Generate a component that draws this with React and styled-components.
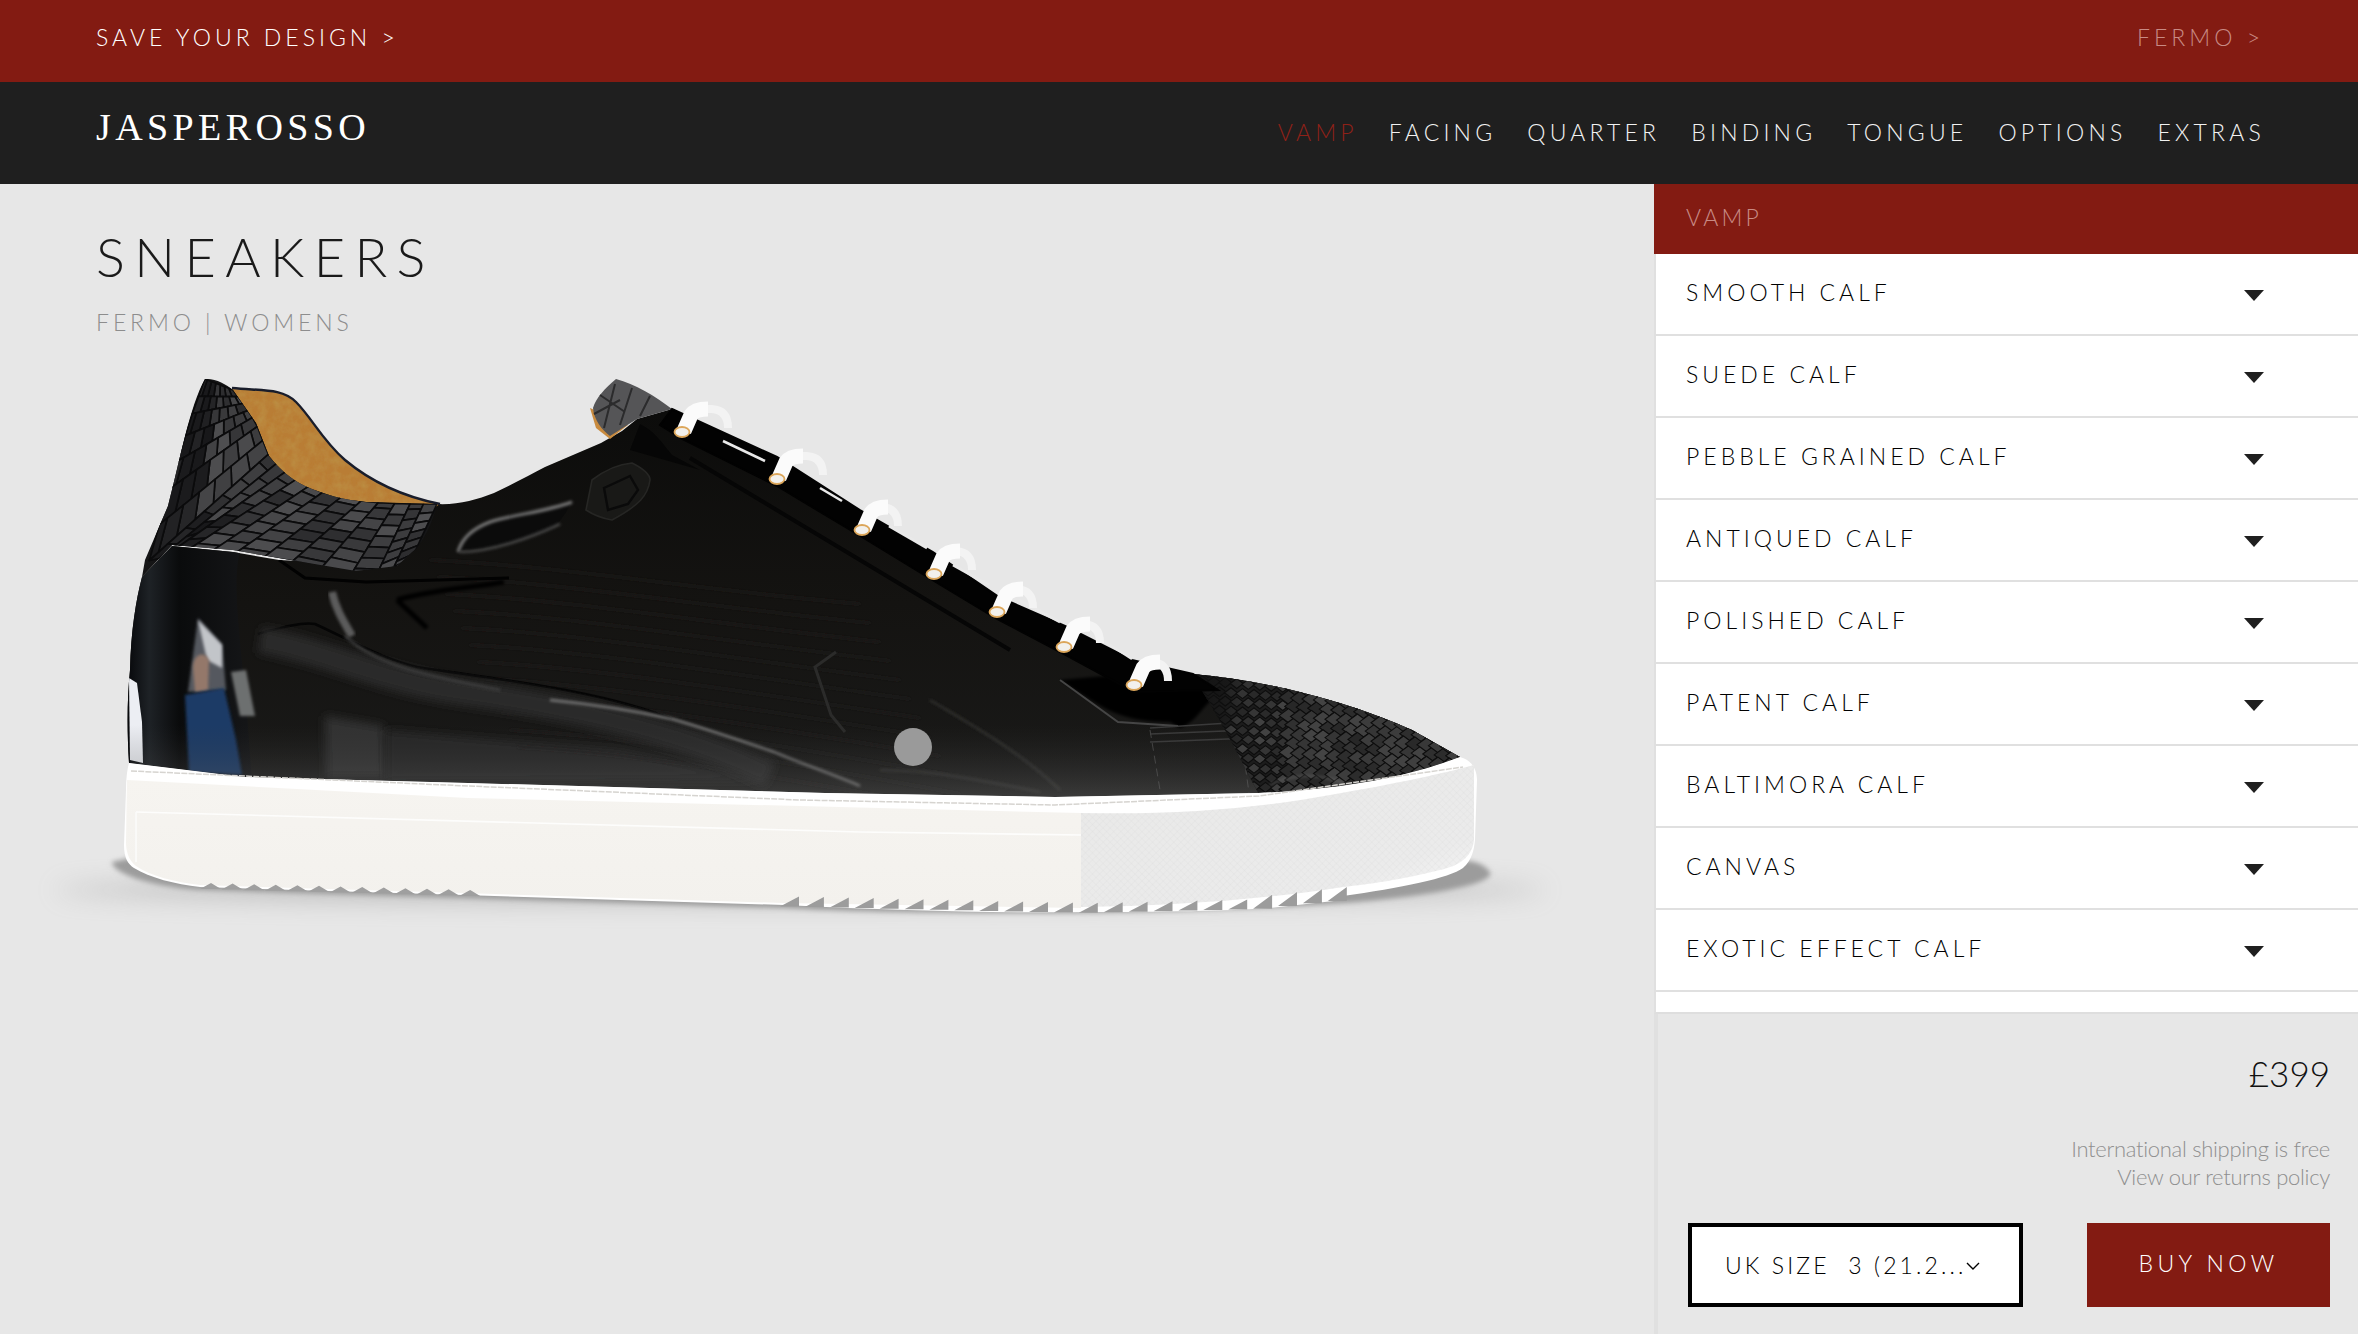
import styled, { createGlobalStyle } from "styled-components";

const Global = createGlobalStyle`
  html, body { margin: 0; padding: 0; background: #e7e7e7; }
  * { box-sizing: border-box; }
`;

const font = `Lato, "Noto Sans", sans-serif`;
const red = "#831b12";

const materials = [
  "SMOOTH CALF",
  "SUEDE CALF",
  "PEBBLE GRAINED CALF",
  "ANTIQUED CALF",
  "POLISHED CALF",
  "PATENT CALF",
  "BALTIMORA CALF",
  "CANVAS",
  "EXOTIC EFFECT CALF",
];

const sections = ["VAMP", "FACING", "QUARTER", "BINDING", "TONGUE", "OPTIONS", "EXTRAS"];

// eyelet x, y and how far its lace arches to the right
const eyelets = [
  [682, 432, 46], [777, 479, 46], [862, 530, 36], [934, 574, 38], [997, 612, 36], [1064, 647, 36], [1134, 685, 34],
];

const lacesGloss = [
  [723, 441, 765, 461], [820, 488, 842, 501], [889, 526, 927, 548],
  [953, 565, 989, 585], [1019, 600, 1060, 622], [1098, 637, 1132, 659],
];

const rnd = (a, b) => {
  const v = Math.sin(a * 12.9898 + b * 78.233) * 43758.5453;
  return v - Math.floor(v);
};

const along = (pts, t) => {
  const f = t * (pts.length - 1);
  const i = Math.min(Math.floor(f), pts.length - 2);
  const k = f - i;
  return [pts[i][0] + (pts[i + 1][0] - pts[i][0]) * k, pts[i][1] + (pts[i + 1][1] - pts[i][1]) * k];
};

// croc cells of the heel counter, warped between its inner and outer edge
const heelInner = [[233, 390], [245, 406], [256, 423], [269, 456], [290, 476], [320, 492], [366, 502], [405, 504], [437, 504]];
const heelOuter = [[205, 379], [190, 420], [172, 480], [148, 565], [178, 548], [233, 552], [300, 562], [370, 578], [412, 558]];
const heelCells = [];
for (let c = 0; c < 19; c++) {
  for (let r = 0; r < 7; r++) {
    const q = (t, s) => {
      const a = along(heelInner, t);
      const b = along(heelOuter, t);
      return [a[0] + (b[0] - a[0]) * s, a[1] + (b[1] - a[1]) * s];
    };
    const off = c % 2 ? 0.5 : 0;
    const t0 = c / 19;
    const t1 = (c + 1) / 19;
    const s0 = Math.max(0, (r - off) / 6.5);
    const s1 = Math.min(1, (r + 1 - off) / 6.5);
    const pts = [q(t0, s0), q(t1, s0), q(t1, s1), q(t0, s1)];
    const dark = r > 3 && c < 10;
    const tone = (dark ? 24 : 44) + rnd(c, r) * (dark ? 14 : 36);
    heelCells.push({
      id: `${c}-${r}`,
      points: pts.map((p) => p.map((n) => n.toFixed(1)).join(",")).join(" "),
      tone: Math.round(tone),
    });
  }
}

// scales of the toe cap
const toeCells = [];
for (let i = 0; i < 26; i++) {
  for (let j = 0; j < 15; j++) {
    const w = i < 9 ? 6.5 : 9.5;
    const h = i < 9 ? 5 : 7;
    const cx = 1185 + i * 11.5 + (j % 2 ? 5.75 : 0);
    const cy = 664 + j * 9.2 + (i - 13) * 0.9;
    const tone = (i < 4 ? 22 : 38) + rnd(i + 3, j + 9) * (i < 4 ? 14 : 30);
    toeCells.push({
      id: `${i}-${j}`,
      points: `${cx - w},${cy} ${cx},${cy - h} ${cx + w},${cy} ${cx},${cy + h}`,
      tone: Math.round(tone),
    });
  }
}

const interp = (table, x) => {
  for (let i = 0; i < table.length - 1; i++) {
    if (x <= table[i + 1][0]) {
      const k = (x - table[i][0]) / (table[i + 1][0] - table[i][0]);
      return table[i][1] + (table[i + 1][1] - table[i][1]) * k;
    }
  }
  return table[table.length - 1][1];
};

const frontBase = [[780, 905], [1090, 912], [1270, 908], [1343, 900]];
const backBase = [[200, 888], [463, 895]];

const frontTeeth = () => {
  let d = "";
  for (let x = 780; x < 1340; x += 24.9) {
    const r = x + 19;
    const y = interp(frontBase, r);
    const h = x > 1240 ? 13 : 9;
    d += `M${x} ${y + 1}L${r} ${y - h}L${r} ${y + 1}Z`;
  }
  return d;
};

const backTeeth = () => {
  let d = "";
  for (let x = 200; x < 460; x += 21.6) {
    const y = interp(backBase, x);
    d += `M${x} ${y + 1}L${x + 11} ${y - 5}L${x + 21} ${y + 1}Z`;
  }
  return d;
};

// grain lines of the patent leather on the vamp
const grain = [];
for (let i = 0; i < 12; i++) {
  const y = 560 + i * 17;
  grain.push(`M${430 + i * 8} ${y}C${560 + i * 6} ${y + 6} ${700 + i * 8} ${y + 30} ${860 + i * 10} ${y + 44 + i * 2}`);
}

const UPPER =
  "M129 763C127 730 127 700 130 670C131 630 136 600 142 577L172 546L233 552L279 560L397 566L437 504C458 505 476 500 494 493C515 483 530 475 545 467L601 443L622 431L637 419L672 409L777 457L860 510L933 552L999 597L1065 626L1132 660L1193 674C1260 680 1340 698 1412 730L1460 757C1400 780 1330 790 1258 793L1055 797L825 793L468 783L244 777Z";
const COUNTER =
  "M205 379C215 378 226 384 233 390L256 423L269 456C280 470 292 480 305 486C325 495 345 500 366 502L437 504C432 525 422 545 412 552L397 566L356 571L279 558L233 550L172 545L142 577L145 560L168 506C180 460 190 405 205 379Z";
const TOE = "M1187 670C1215 705 1240 760 1262 800L1480 790L1480 700L1290 665Z";
const PANEL =
  "M1081 813C1180 815 1260 808 1330 795C1400 783 1445 773 1474 765L1474 840C1472 858 1458 866 1440 870C1400 880 1370 884 1343 887C1260 900 1170 906 1081 907Z";

const Shoe = () => (
  <ShoeSvg viewBox="0 350 1654 700">
    <defs>
      <filter id="wide" x="-20%" y="-300%" width="140%" height="700%"><feGaussianBlur stdDeviation="12" /></filter>
      <filter id="blur6" x="-20%" y="-40%" width="140%" height="180%"><feGaussianBlur stdDeviation="5" /></filter>
      <filter id="blur2" x="-20%" y="-40%" width="140%" height="180%"><feGaussianBlur stdDeviation="1.4" /></filter>
      <filter id="soft" x="-10%" y="-60%" width="120%" height="220%"><feGaussianBlur stdDeviation="2.4" /></filter>
      <filter id="suede">
        <feTurbulence type="fractalNoise" baseFrequency="0.12" numOctaves="3" />
        <feColorMatrix values="0 0 0 0 0.5  0 0 0 0 0.28  0 0 0 0 0.06  0 0 0 1.4 -0.45" />
        <feComposite in2="SourceGraphic" operator="in" />
        <feMerge><feMergeNode in="SourceGraphic" /><feMergeNode /></feMerge>
      </filter>
      <linearGradient id="body" x1="0" y1="0" x2="0" y2="1">
        <stop offset="0" stopColor="#0c0c0b" />
        <stop offset="0.5" stopColor="#141311" />
        <stop offset="1" stopColor="#1a1a19" />
      </linearGradient>
      <linearGradient id="heelCup" x1="0" y1="0" x2="1" y2="0">
        <stop offset="0" stopColor="#06070a" />
        <stop offset="0.18" stopColor="#1e2226" />
        <stop offset="0.42" stopColor="#0a0b0c" />
        <stop offset="1" stopColor="#151618" />
      </linearGradient>
      <linearGradient id="toeIn" x1="0" y1="0" x2="1" y2="0">
        <stop offset="0" stopColor="#101010" stopOpacity="1" />
        <stop offset="0.2" stopColor="#101010" stopOpacity="0" />
      </linearGradient>
      <linearGradient id="baseFade" x1="0" y1="0" x2="0" y2="1">
        <stop offset="0" stopColor="#3a3a3a" stopOpacity="0" />
        <stop offset="1" stopColor="#707070" stopOpacity="0.4" />
      </linearGradient>
      <linearGradient id="capFade" x1="0" y1="0" x2="1" y2="1">
        <stop offset="0" stopColor="#e9e9e8" />
        <stop offset="0.75" stopColor="#ebebeb" />
        <stop offset="1" stopColor="#f8f8f8" />
      </linearGradient>
      <linearGradient id="cream" x1="0" y1="0" x2="0" y2="1">
        <stop offset="0" stopColor="#f6f4f0" />
        <stop offset="1" stopColor="#f3f1ed" />
      </linearGradient>
      <pattern id="mesh" width="5" height="5" patternUnits="userSpaceOnUse" patternTransform="rotate(45)">
        <path d="M0 0H5M0 0V5" stroke="#d8d8d8" strokeWidth="0.8" opacity="0.5" fill="none" />
      </pattern>
      <clipPath id="upperClip"><path d={UPPER} /></clipPath>
      <clipPath id="counterClip"><path d={COUNTER} /></clipPath>
      <clipPath id="toeClip"><path d={TOE} /></clipPath>
    </defs>

    {/* floor shadow */}
    <ellipse cx="800" cy="890" rx="745" ry="12" fill="#8e8e8e" opacity="0.5" filter="url(#wide)" />
    <path d="M112 862C112 875 160 888 200 890L463 898L784 908C900 915 1160 916 1343 903C1420 897 1496 885 1490 872C1480 858 1460 860 1440 860L130 858Z" fill="#9c9c9c" filter="url(#soft)" />

    {/* upper */}
    <path d={UPPER} fill="url(#body)" />
    <g clipPath="url(#upperClip)">
      <path d="M128 770C124 700 128 620 142 575L172 544L240 552C232 580 240 640 246 700L252 782Z" fill="url(#heelCup)" />
      <path d="M129 678L137 683L142 722L143 763L130 760Z" fill="#eceef3" />
      <path d="M188 692L198 618L222 644L226 690Z" fill="#55585e" filter="url(#blur2)" />
      <path d="M198 620L222 645L222 668L207 660Z" fill="#c2c5c9" filter="url(#blur2)" />
      <path d="M193 668C193 654 204 650 209 660L208 690L195 692Z" fill="#94786a" filter="url(#blur2)" />
      <path d="M185 695L224 688L236 740L242 775L189 772Z" fill="#1b3a66" filter="url(#blur2)" />
      <path d="M231 672L246 670L255 716L240 716Z" fill="#6d6f70" filter="url(#blur2)" />
      <path d="M325 716L384 726L386 778L326 778Z" fill="#303232" filter="url(#blur6)" />
      <path d="M386 730L620 750L770 780L386 782Z" fill="#262727" filter="url(#blur6)" />

      {/* patent gloss */}
      {grain.map((d) => (
        <path key={d} d={d} fill="none" stroke="#201f1d" strokeWidth="1.3" filter="url(#blur2)" />
      ))}
      <path d="M258 634C280 628 300 622 315 624C350 640 385 660 417 667C500 680 600 690 672 719" fill="none" stroke="#050505" strokeWidth="2.5" />
      <path d="M260 640C320 650 380 680 460 692C560 706 680 730 770 775" fill="none" stroke="#2a2a2a" strokeWidth="26" filter="url(#blur6)" />
      <path d="M332 592C336 610 344 622 352 636" fill="none" stroke="#5c5c5c" strokeWidth="8" filter="url(#blur2)" />
      <path d="M345 636C380 668 430 676 500 690" fill="none" stroke="#3c3c3c" strokeWidth="3" filter="url(#blur2)" />
      <path d="M550 700C590 704 640 712 672 719C710 730 745 742 774 752C805 765 835 775 860 786" fill="none" stroke="#7c7c7c" strokeWidth="2.4" filter="url(#blur2)" />
      <path d="M279 560L305 578L366 582L509 578" fill="none" stroke="#020202" strokeWidth="3" />
      <path d="M397 600C430 590 470 588 504 582M397 600L427 628" fill="none" stroke="#020202" strokeWidth="5" filter="url(#blur2)" />
      <path d="M458 550C462 540 470 532 482 526C510 512 540 510 570 504C566 514 560 522 552 528C520 540 490 550 458 550Z" fill="#0b0b0b" />
      <path d="M458 552C462 538 474 528 490 522C515 514 545 512 572 502" fill="none" stroke="#7a7a7a" strokeWidth="3" filter="url(#blur2)" />
      <path d="M460 552C490 552 530 538 560 524" fill="none" stroke="#555" strokeWidth="2" filter="url(#blur2)" />
      <path d="M592 480C605 470 620 464 632 463C642 468 650 474 650 480C648 495 640 505 612 520C600 518 592 514 586 510Z" fill="#191917" stroke="#262624" strokeWidth="1.6" />
      <path d="M604 488L630 476L638 490L628 504L608 510Z" fill="none" stroke="#0a0a0a" strokeWidth="2.4" />
      <path d="M672 455C660 440 655 432 640 424L630 450L700 470Z" fill="#060606" />
      <path d="M836 652L815 667L831 715L845 732" fill="none" stroke="#2b2b2a" strokeWidth="3" />
      <path d="M930 700C980 730 1020 752 1060 790M880 770C930 770 980 780 1040 792" fill="none" stroke="#343432" strokeWidth="2" filter="url(#blur2)" />

      {/* eyestay */}
      <path d="M690 458L860 560L1010 650" fill="none" stroke="#060606" strokeWidth="4" />
      <path d="M1060 680C1100 705 1115 722 1170 722L1180 728C1200 720 1200 705 1225 690L1150 672Z" fill="#030303" filter="url(#blur2)" />
      <path d="M1060 680L1118 722L1178 726" fill="none" stroke="#454545" strokeWidth="2" />
      <path d="M1150 728L1245 722M1150 734L1250 730M1150 742L1254 738" stroke="#3a3a3a" strokeWidth="1.4" fill="none" />
      <path d="M1150 730L1160 790M1240 728L1250 800" stroke="#444" strokeWidth="1" fill="none" strokeDasharray="8 5" />
      <rect x="130" y="725" width="1350" height="75" fill="url(#baseFade)" />

      {/* toe cap */}
      <g clipPath="url(#toeClip)">
        <rect x="1180" y="660" width="300" height="140" fill="#1c1c1c" />
        {toeCells.map((c) => (
          <polygon key={c.id} points={c.points} fill={`rgb(${c.tone},${c.tone},${c.tone})`} stroke="#0d0d0d" strokeWidth="1.1" />
        ))}
        <rect x="1180" y="660" width="300" height="140" fill="url(#toeIn)" />
      </g>
      <path d="M1270 785C1300 770 1330 775 1360 790" fill="none" stroke="#707070" strokeWidth="2" filter="url(#blur2)" opacity="0.5" />
    </g>

    {/* throat and tongue */}
    <path d="M590 408L596 428L610 439L628 425Z" fill="#c98b3f" />
    <path d="M616 379C605 388 596 398 593 408C594 420 602 430 610 436L637 419L672 409C655 396 635 384 616 379Z" fill="#555557" />
    <path d="M600 395L625 412M615 384L604 428M632 388L620 425M650 396L640 416M594 414L620 400" fill="none" stroke="#2b2b2c" strokeWidth="2" />
    <path d="M672 409L777 457L860 510L933 552L999 597L1065 626L1132 660L1193 674L1218 690L1134 692L1064 654L997 619L934 581L862 537L777 486L682 439L660 425Z" fill="#020202" stroke="#020202" strokeWidth="2" />
    {lacesGloss.map(([a, b, c, d]) => (
      <path key={a} d={`M${a} ${b}L${c} ${d}`} stroke="#e9e9e9" strokeWidth="2.6" />
    ))}

    {/* suede lining */}
    <path d="M232 389C262 391 282 388 296 402C312 418 322 440 345 460C375 485 410 498 440 504L400 530L280 500L225 410Z" fill="#b97d34" filter="url(#suede)" />
    <path d="M232 388C262 391 282 388 296 402C312 418 322 440 345 460C375 485 410 498 440 504" fill="none" stroke="#191d2b" strokeWidth="2.4" />

    {/* heel counter */}
    <path d={COUNTER} fill="#151516" />
    <g clipPath="url(#counterClip)">
      {heelCells.map((c) => (
        <polygon key={c.id} points={c.points} fill={`rgb(${c.tone},${c.tone},${c.tone + 2})`} stroke="#0b0b0c" strokeWidth="1.7" strokeLinejoin="round" />
      ))}
    </g>

    {/* sole */}
    <path d="M129 763C127 770 126 780 126 790L124 845C124 858 128 864 134 868C150 878 175 884 200 887L463 895L784 905C900 911 1000 913 1090 912C1160 912 1230 911 1270 908L1343 900L1343 896C1400 888 1450 878 1463 868C1472 860 1474 850 1475 840L1477 780C1477 770 1472 760 1460 757C1400 780 1330 790 1258 793L1055 797L825 793L468 783L244 777Z" fill="#fff" />
    <path d="M127 780L468 798L800 806L1081 813L1081 908L784 903L463 893L200 885C175 882 150 876 136 866C128 860 126 850 126 842Z" fill="url(#cream)" />
    <path d={PANEL} fill="url(#capFade)" />
    <path d={PANEL} fill="url(#mesh)" />
    <path d="M131 771L468 786L800 800L1055 805L1259 796L1463 767" fill="none" stroke="#d6d4d0" strokeWidth="1.5" strokeDasharray="6 1.2" />
    <path d="M136 812L860 832L1081 835" fill="none" stroke="#fdfdfc" strokeWidth="1.6" />
    <path d="M136 812L136 862" fill="none" stroke="#fbfbfa" strokeWidth="1.6" />

    {/* outsole teeth */}
    <path d={backTeeth()} fill="#9f9f9f" />
    <path d={frontTeeth()} fill="#9c9c9c" />

    {/* laces */}
    {eyelets.map(([x, y, w]) => (
      <g key={x}>
        <path d={`M${x + 24} ${y - 23}L${x + w - 16} ${y - 23}Q${x + w} ${y - 22} ${x + w} ${y - 4}`} stroke="#f3f3f3" strokeWidth="8" fill="none" />
        <path d={`M${x + 2} ${y - 1}L${x + 9} ${y - 17}Q${x + 13} ${y - 23} ${x + 26} ${y - 23}`} stroke="#fbfbfb" strokeWidth="15" fill="none" />
        <ellipse cx={x} cy={y} rx="7.5" ry="5" fill="#f2f0ec" stroke="#dca65a" strokeWidth="1.8" />
      </g>
    ))}

    <circle cx="913" cy="747" r="19" fill="#9a9a9a" />
  </ShoeSvg>
);

const App = () => (
  <Page>
    <Global />
    <TopBar>
      <SaveLink>SAVE YOUR DESIGN &gt;</SaveLink>
      <ModelLink>FERMO &gt;</ModelLink>
    </TopBar>
    <NavBar>
      <Logo>JASPEROSSO</Logo>
      <Nav>
        {sections.map((s, i) => (
          <NavItem key={s} $active={i === 0}>{s}</NavItem>
        ))}
      </Nav>
    </NavBar>
    <Main>
      <Stage>
        <Heading>
          <Title>SNEAKERS</Title>
          <Subtitle>FERMO | WOMENS</Subtitle>
        </Heading>
        <Shoe />
      </Stage>
      <Side>
        <SideHeader>VAMP</SideHeader>
        <List>
          {materials.map((m) => (
            <Row key={m}>
              <span>{m}</span>
              <Caret />
            </Row>
          ))}
        </List>
        <Footer>
          <Price>£399</Price>
          <Note>
            International shipping is free
            <br />
            View our returns policy
          </Note>
          <Actions>
            <SizeSelect>
              <span>UK SIZE&nbsp; 3 (21.2...</span>
              <Chevron viewBox="0 0 14 8">
                <path d="M1 1L7 7L13 1" fill="none" stroke="#000" strokeWidth="1.4" />
              </Chevron>
            </SizeSelect>
            <BuyButton>BUY NOW</BuyButton>
          </Actions>
        </Footer>
      </Side>
    </Main>
  </Page>
);

const Page = styled.div`
  width: 2358px;
  height: 1334px;
  overflow: hidden;
  display: flex;
  flex-direction: column;
  background: #e7e7e7;
  font-family: ${font};
`;

const TopBar = styled.div`
  height: 82px;
  flex: none;
  background: ${red};
  padding: 24px 96px 0;
  display: flex;
  justify-content: space-between;
  align-items: flex-start;
  font-size: 23px;
  line-height: 26px;
  font-weight: 300;
`;

const SaveLink = styled.span`
  color: #fff;
  letter-spacing: 4px;
`;

const ModelLink = styled.span`
  color: #c88a84;
  letter-spacing: 4px;
  margin-right: -2px;
`;

const NavBar = styled.div`
  height: 102px;
  flex: none;
  background: #1f1f1f;
  padding: 0 96px;
  display: flex;
  justify-content: space-between;
`;

const Logo = styled.div`
  font-family: "Liberation Serif", serif;
  color: #fff;
  font-size: 38px;
  line-height: 40px;
  letter-spacing: 4.4px;
  padding-top: 25px;
`;

const Nav = styled.nav`
  display: flex;
  gap: 31px;
  padding-top: 36px;
  margin-right: -3px;
`;

const NavItem = styled.span`
  color: ${(p) => (p.$active ? "#8f2118" : "#f2f2f2")};
  font-size: 23px;
  line-height: 28px;
  letter-spacing: 4.2px;
  font-weight: 300;
`;

const Main = styled.div`
  flex: 1;
  display: flex;
  min-height: 0;
`;

const Stage = styled.div`
  width: 1654px;
  flex: none;
  display: flex;
  flex-direction: column;
`;

const Heading = styled.div`
  height: 166px;
  flex: none;
  padding: 46px 0 0 96px;
`;

const Title = styled.h1`
  margin: 0;
  color: #1a1a1a;
  font-size: 54px;
  line-height: 54px;
  font-weight: 300;
  letter-spacing: 9.4px;
`;

const Subtitle = styled.div`
  margin-top: 25px;
  color: #8d8d8d;
  font-size: 23px;
  line-height: 26px;
  font-weight: 300;
  letter-spacing: 3.9px;
`;

const ShoeSvg = styled.svg`
  display: block;
  width: 1654px;
  height: 700px;
  flex: none;
`;

const Side = styled.aside`
  flex: 1;
  display: flex;
  flex-direction: column;
  min-width: 0;
`;

const SideHeader = styled.div`
  height: 70px;
  flex: none;
  background: ${red};
  color: #c88a84;
  font-size: 23px;
  font-weight: 300;
  letter-spacing: 3.2px;
  line-height: 66px;
  padding-left: 32px;
`;

const List = styled.div`
  height: 760px;
  flex: none;
  background: #fff;
  border-left: 2px solid #e0e0e0;
  border-bottom: 2px solid #dedede;
`;

const Row = styled.div`
  height: 82px;
  border-bottom: 2px solid #e0e0e0;
  display: flex;
  align-items: center;
  justify-content: space-between;
  padding: 0 94px 4px 30px;
  color: #000;
  font-size: 23px;
  font-weight: 300;
  letter-spacing: 4px;
`;

const Caret = styled.i`
  width: 0;
  height: 0;
  margin-top: 6px;
  border-left: 10px solid transparent;
  border-right: 10px solid transparent;
  border-top: 11px solid #1f1f1f;
`;

const Footer = styled.div`
  flex: 1;
  display: flex;
  flex-direction: column;
  align-items: flex-end;
  padding: 37px 28px 0 30px;
  border-left: 4px solid #e0e0e0;
`;

const Price = styled.div`
  color: #111;
  font-size: 35px;
  line-height: 44px;
  font-weight: 300;
`;

const Note = styled.div`
  margin-top: 40px;
  color: #8f8f8f;
  font-size: 22px;
  line-height: 28px;
  font-weight: 300;
  text-align: right;
  letter-spacing: -0.3px;
`;

const Actions = styled.div`
  margin-top: 32px;
  align-self: stretch;
  display: flex;
  justify-content: space-between;
`;

const SizeSelect = styled.div`
  width: 335px;
  height: 84px;
  background: #fff;
  border: 4px solid #000;
  display: flex;
  align-items: center;
  padding: 0 0 0 33px;
  color: #000;
  font-size: 23px;
  font-weight: 300;
  letter-spacing: 3.1px;
  white-space: nowrap;
`;

const Chevron = styled.svg`
  flex: none;
  width: 14px;
  height: 8px;
  margin-top: 2px;
`;

const BuyButton = styled.button`
  width: 243px;
  height: 84px;
  border: 0;
  background: ${red};
  color: #fff;
  font-family: ${font};
  font-size: 23px;
  font-weight: 300;
  letter-spacing: 4.4px;
  padding: 0 0 4px;
`;

export default App;
